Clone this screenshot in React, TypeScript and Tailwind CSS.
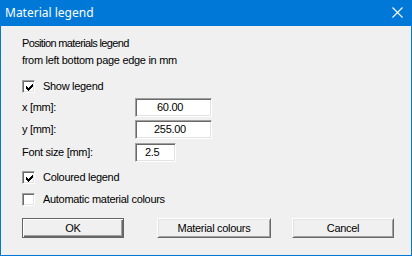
import React from "react";

const font = { fontFamily: '"Liberation Sans", Arial, sans-serif' };

function Check() {
  const cols = [2, 3, 4, 3, 2, 1, 0];
  return (
    <svg width="7" height="7" viewBox="0 0 7 7" shapeRendering="crispEdges" className="absolute left-[3px] top-[3px]">
      {cols.map((y, x) => (
        <rect key={x} x={x} y={y} width="1" height="3" fill="#000" />
      ))}
    </svg>
  );
}

function CheckBox({ checked, label }: { checked: boolean; label: string }) {
  return (
    <div className="flex items-center h-[13px]">
      <div className="relative w-[13px] h-[13px] bg-white border border-t-[#a0a0a0] border-l-[#a0a0a0] border-b-white border-r-white shadow-[inset_1px_1px_0_#696969,inset_-1px_-1px_0_#e3e3e3]">
        {checked && <Check />}
      </div>
      <span className="ml-[8px] text-[11px] leading-[13px] text-black tracking-[-0.3px]">{label}</span>
    </div>
  );
}

function Field({ label, value, w, pl, mt }: { label: string; value: string; w: string; pl: string; mt: string }) {
  return (
    <div className={`flex items-center ${mt}`}>
      <span className="w-[113px] text-[11px] text-black tracking-[-0.3px]">{label}</span>
      <div
        className={`h-[19px] ${w} ${pl} flex items-center bg-white border border-t-[#a0a0a0] border-l-[#a0a0a0] border-b-white border-r-white shadow-[inset_1px_1px_0_#696969,inset_-1px_-1px_0_#e3e3e3] text-[11px] text-black tracking-[-0.3px]`}
      >
        {value}
      </div>
    </div>
  );
}

export default function App() {
  return (
    <div
      className="w-[412px] h-[256px] flex flex-col bg-[#f0f0f0] border-l border-r border-b border-[#0078d7]"
      style={font}
    >
      <div className="h-[26px] shrink-0 bg-[#0078d7] flex items-center justify-between pl-[4px] pr-[9px] -mx-px">
        <span className="text-white text-[12px] pl-px" style={{ fontFamily: '"Noto Sans", "Open Sans", sans-serif' }}>
          Material legend
        </span>
        <svg width="11" height="11" viewBox="0 0 11 11" className="-mt-[1px]">
          <path d="M0.5 0.5 L10.5 10.5 M10.5 0.5 L0.5 10.5" stroke="#fff" strokeWidth="1.1" />
        </svg>
      </div>
      <div className="flex flex-col pl-[21px] pt-[9px]">
        <div className="text-[11px] leading-[17px] text-black">
          <div className="tracking-[-0.65px]">Position materials legend</div>
          <div className="tracking-[-0.3px]">from left bottom page edge in mm</div>
        </div>
        <div className="mt-[11px]">
          <CheckBox checked label="Show legend" />
        </div>
        <Field label="x [mm]:" value="60.00" w="w-[77px]" pl="pl-[21px]" mt="mt-[5px]" />
        <Field label="y [mm]:" value="255.00" w="w-[77px]" pl="pl-[18px]" mt="mt-[3px]" />
        <Field label="Font size [mm]:" value="2.5" w="w-[41px]" pl="pl-[9px]" mt="mt-[4px]" />
        <div className="mt-[9px]">
          <CheckBox checked label="Coloured legend" />
        </div>
        <div className="mt-[9px]">
          <CheckBox checked={false} label="Automatic material colours" />
        </div>
        <div className="flex mt-[12px] text-[11px] text-black tracking-[-0.3px]">
          <div className="w-[102px] h-[20px] flex items-center justify-center bg-[#f0f0f0] border border-[#646464] shadow-[inset_1px_1px_0_#fff,inset_-1px_-1px_0_#696969,inset_-2px_-2px_0_#a0a0a0]">
            OK
          </div>
          <div className="ml-[33px] w-[114px] h-[20px] flex items-center justify-center bg-[#f0f0f0] border border-t-white border-l-white border-b-[#696969] border-r-[#696969] shadow-[inset_1px_1px_0_#e3e3e3,inset_-1px_-1px_0_#a0a0a0]">
            Material colours
          </div>
          <div className="ml-[21px] w-[102px] h-[20px] flex items-center justify-center bg-[#f0f0f0] border border-t-white border-l-white border-b-[#696969] border-r-[#696969] shadow-[inset_1px_1px_0_#e3e3e3,inset_-1px_-1px_0_#a0a0a0]">
            Cancel
          </div>
        </div>
      </div>
    </div>
  );
}
